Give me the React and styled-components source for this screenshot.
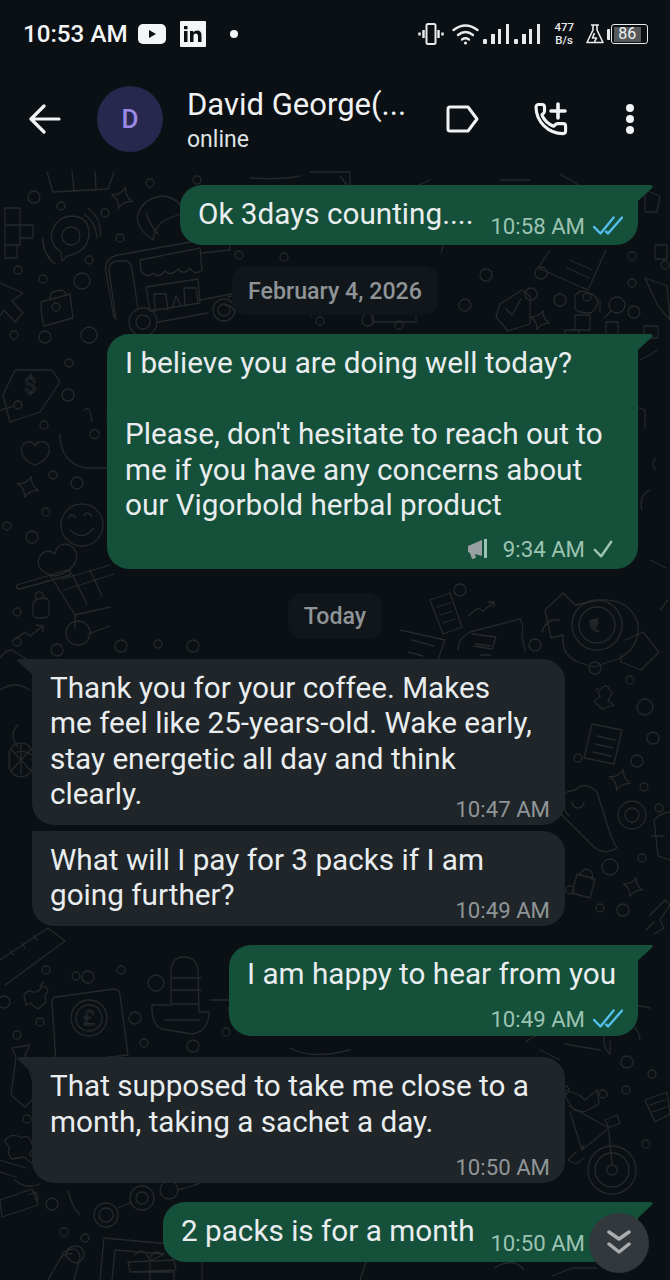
import React from "react";
import styled, { createGlobalStyle } from "styled-components";

const Global = createGlobalStyle`
  html, body { margin: 0; padding: 0; background: #0b1014; }
  * { box-sizing: border-box; }
`;

const Screen = styled.div`
  width: 670px;
  height: 1280px;
  overflow: hidden;
  background: #0b1014;
  font-family: Roboto, "Liberation Sans", sans-serif;
  color: #e9edef;
  display: flex;
  flex-direction: column;
`;

const Header = styled.header`
  height: 170px;
  flex: none;
  display: flex;
  flex-direction: column;
  background: #0b1014;
`;

const StatusBar = styled.div`
  height: 68px;
  padding: 0 22px 0 23px;
  display: flex;
  align-items: center;
  justify-content: space-between;
`;

const StatusGroup = styled.div`
  display: flex;
  align-items: center;
`;

const Clock = styled.span`
  font-size: 24.2px;
  font-weight: 500;
  color: #f4f5f6;
  margin-right: 10px;
`;

const NetSpeed = styled.span`
  display: flex;
  flex-direction: column;
  align-items: center;
  font-size: 11.5px;
  line-height: 13px;
  font-weight: 500;
  color: #e8eaeb;
  margin: 0 12px 0 13px;
`;

const BatteryWrap = styled.div`
  display: flex;
  align-items: center;
  margin-left: 3px;
`;

const BatteryNub = styled.span`
  width: 3px;
  height: 11px;
  background: #e8eaeb;
  border-radius: 1px 0 0 1px;
  margin-right: 1px;
`;

const Battery = styled.div`
  width: 37px;
  height: 20px;
  border: 1.5px solid #e8eaeb;
  border-radius: 3px;
  padding: 1.5px;
  display: flex;
`;

const BatteryFill = styled.span`
  flex: none;
  width: 86%;
  background: #55595b;
  color: #f0f1f2;
  font-size: 16px;
  line-height: 14px;
  text-align: center;
`;

const Toolbar = styled.div`
  flex: 1;
  display: flex;
  align-items: center;
  padding: 0 0 0 29px;
`;

const Avatar = styled.div`
  width: 66px;
  height: 66px;
  border-radius: 50%;
  background: #28284f;
  color: #9a8ae6;
  font-size: 26px;
  font-weight: 500;
  display: flex;
  align-items: center;
  justify-content: center;
  margin: 0 24px 0 36px;
`;

const Contact = styled.div`
  width: 258px;
  display: flex;
  flex-direction: column;
  margin-top: 4px;
`;

const ContactName = styled.div`
  font-size: 31px;
  line-height: 36px;
  color: #f0f2f3;
  white-space: nowrap;
`;

const ContactStatus = styled.div`
  font-size: 23px;
  line-height: 33px;
  color: #dfe2e4;
`;

const ToolIcon = styled.div`
  width: ${(p) => p.$w}px;
  margin-left: ${(p) => p.$left || 0}px;
  display: flex;
  justify-content: center;
  flex: none;
`;

const Chat = styled.main`
  position: relative;
  flex: 1;
  overflow: hidden;
`;

const Doodles = styled.svg`
  position: absolute;
  inset: 0;
  width: 670px;
  height: 1110px;
  fill: none;
  stroke: #25292c;
  stroke-width: 1.3;
  stroke-linejoin: round;
  stroke-linecap: round;
  text { font-family: Roboto, sans-serif; stroke-width: 1; }
`;

const Messages = styled.div`
  position: relative;
  display: flex;
  flex-direction: column;
  padding-top: 15px;
`;

const Bubble = styled.div`
  position: relative;
  flex: none;
  width: ${(p) => p.$w}px;
  margin-top: ${(p) => p.$top}px;
  align-self: ${(p) => (p.$out ? "flex-end" : "flex-start")};
  margin-left: ${(p) => (p.$out ? 0 : 32)}px;
  margin-right: ${(p) => (p.$out ? 32 : 0)}px;
  background: ${(p) => (p.$out ? "#14503a" : "#1f2528")};
  border-radius: ${(p) => (p.$out ? "22px 0 22px 22px" : "0 22px 22px 22px")};
  padding: 11px 15px ${(p) => p.$pb}px 18px;

  &::before {
    content: "";
    position: absolute;
    top: 0;
    width: ${(p) => (p.$tail ? 15 : 0)}px;
    height: 16px;
    background: inherit;
    ${(p) =>
      p.$out
        ? "left: 100%; clip-path: polygon(0 0, 88% 0, 100% 12%, 0 100%);"
        : "right: 100%; clip-path: polygon(100% 0, 12% 0, 0 12%, 100% 100%);"}
  }
`;

const InlineRow = styled.div`
  display: flex;
  justify-content: space-between;
  align-items: flex-end;
`;

const Text = styled.div`
  font-size: 29.7px;
  line-height: 35.5px;
  white-space: nowrap;
  color: #e9edef;
  margin-bottom: ${(p) => p.$below || 0}px;
`;

const Meta = styled.div`
  height: 28px;
  margin-top: ${(p) => p.$top || 0}px;
  display: flex;
  align-items: center;
  justify-content: flex-end;
  gap: 8px;
  font-size: 22.2px;
  color: ${(p) => (p.$out ? "#9cc3b2" : "#8f9598")};
  white-space: nowrap;
`;

const DatePill = styled.div`
  align-self: center;
  flex: none;
  height: ${(p) => p.$h}px;
  margin-top: ${(p) => p.$top}px;
  padding: 0 16px;
  border-radius: 14px;
  background: #11161a;
  color: #8e9497;
  font-size: 23.2px;
  font-weight: 500;
  display: flex;
  align-items: center;
`;

const ScrollButton = styled.div`
  position: absolute;
  left: 589px;
  top: 1043px;
  width: 60px;
  height: 60px;
  border-radius: 50%;
  background: #32383c;
  display: flex;
  align-items: center;
  justify-content: center;
`;

const TicksSvg = styled.svg`
  flex: none;
`;

const CheckSvg = styled.svg`
  flex: none;
  margin-right: 10px;
`;

const MegaphoneSvg = styled.svg`
  flex: none;
  margin-right: 6px;
`;

const LinkedinSvg = styled.svg`
  margin: 0 24px 0 14px;
`;

const WifiSvg = styled.svg`
  margin-left: 8px;
`;

const SignalSvg = styled.svg`
  margin-left: 4px;
`;

const Ticks = () => (
  <TicksSvg width="30" height="22" viewBox="0 0 32 22" fill="none" stroke="#53bdeb" strokeWidth="2.6" strokeLinecap="round" strokeLinejoin="round">
    <path d="M1 12l7 7L22 2" />
    <path d="M14 17l2 2L31 2" />
  </TicksSvg>
);

const Check = () => (
  <CheckSvg width="20" height="20" viewBox="0 0 22 20" fill="none" stroke="#9cc3b2" strokeWidth="2.7" strokeLinecap="round" strokeLinejoin="round">
    <path d="M2 11l7 7L20 2" />
  </CheckSvg>
);

const Megaphone = () => (
  <MegaphoneSvg width="22" height="22" viewBox="0 0 22 22">
    <path d="M1 8l14-6v16L8 16l1 4-4 1-2-6-2-1z" fill="#9aa0a2" />
    <path d="M18.5 1v19" stroke="#9cc3b2" strokeWidth="3" />
  </MegaphoneSvg>
);

const Star = ({ x, y, r }) => (
  <path d={`M${x} ${y - r}Q${x + r * 0.2} ${y - r * 0.2} ${x + r} ${y}Q${x + r * 0.2} ${y + r * 0.2} ${x} ${y + r}Q${x - r * 0.2} ${y + r * 0.2} ${x - r} ${y}Q${x - r * 0.2} ${y - r * 0.2} ${x} ${y - r}z`} transform={`rotate(18 ${x} ${y})`} />
);

const dots = [
  [34, 197, 6], [61, 206, 4], [105, 213, 4], [150, 183, 4], [120, 238, 4], [89, 260, 4], [18, 270, 4], [43, 279, 4], [82, 281, 8], [14, 335, 4],
  [45, 337, 6], [89, 335, 8], [69, 363, 4], [197, 180, 4], [68, 395, 6], [44, 425, 4], [53, 475, 4], [77, 483, 6], [46, 512, 4], [7, 526, 4],
  [32, 537, 6], [17, 612, 4], [57, 650, 6], [17, 642, 4], [121, 646, 6], [158, 644, 4], [193, 646, 6], [460, 590, 6], [535, 645, 6],
  [595, 668, 6], [630, 680, 4], [645, 707, 8], [653, 738, 6], [578, 758, 4], [637, 761, 6], [644, 787, 4], [610, 867, 8], [642, 858, 4],
  [570, 890, 4], [600, 908, 4], [623, 910, 6], [659, 808, 4], [76, 976, 4], [88, 977, 6], [46, 970, 4], [121, 970, 4], [156, 983, 8],
  [4, 1002, 6], [40, 1022, 4], [135, 1018, 6], [144, 1043, 4], [193, 1046, 6], [226, 1032, 4], [17, 1035, 4], [27, 1119, 4], [52, 1204, 6],
  [64, 1232, 4], [85, 1238, 4], [627, 1062, 6], [652, 1074, 4], [603, 1094, 4], [626, 1090, 4], [646, 1144, 4], [239, 255, 4], [284, 257, 4],
  [486, 275, 6], [541, 273, 6], [531, 294, 6], [465, 305, 6], [368, 320, 6], [320, 321, 4], [399, 325, 4], [632, 256, 4], [665, 265, 4],
  [632, 283, 4], [587, 297, 4], [634, 312, 6], [560, 300, 6], [565, 1090, 4],
];

const lines = [
  "M47 172l6 20 55-3 6-17M72 172l2 18M95 172l1 16",
  "M5 208h15v17H5zM20 225h13v13H20zM5 225h15v20H5zM5 245h12v13H5z",
  "M52 232q4-14 18-16 18 0 19 16 0 20-22 24l-5 5-1-9q-12-8-9-20zM62 236a9 9 0 1 1 18 0 9 9 0 1 1-18 0zM43 240q1 16 12 24M50 258q-8-8-7-20M84 214q12 8 13 24M88 208q14 10 12 28",
  "M114 318l-8-46q-2-14 12-17l84-15 28-3v13l-28 3M116 320l-7-50q0-8 8-9h8q6 0 7 8l6 40M140 260l60-12 2 22q-8 6-12-2-6 8-12 1-7 8-13 2-6 8-12 2-6 6-12-2zM146 287l52-8 2 24-50 8zM155 312l-1-18h12l2 16M172 308l4-12 5 10M185 306l-1-18h12l2 15M158 322l50-9M232 296l-4 1",
  "M129 322a14 14 0 1 0 28 0 14 14 0 1 0-28 0zM136 322a7 7 0 1 0 14 0 7 7 0 1 0-14 0zM213 310a11 11 0 1 0 22 0 11 11 0 1 0-22 0zM218 310a6 6 0 1 0 12 0 6 6 0 1 0-12 0z",
  "M41 302l29-8 3 24-29 8q-3-10-3-24zM50 298q0-6 6-7l6-1q4 2 4 6M52 307a4 4 0 1 0 8 0 4 4 0 1 0-8 0z",
  "M0 283l23 10-11 8 11 12-8 9-11-12-4 6",
  "M137 218q3-18 24-22 16 0 24 16l-20 8q-10 6-12 20-14-8-16-22zM146 212q4 14 12 22",
  "M3 395l12-25h37l8 12-20 30-30 10zM14 405a4 4 0 1 0 8 0 4 4 0 1 0-8 0zM0 410l14-4",
  "M35 465c-12-4-16-14-12-20 4-5 10-4 12 1 2-5 9-6 13-1 4 6-1 16-13 20z",
  "M107 420q0-24 30-34M60 434q0 28 25 34l25 0M90 434a4 4 0 1 0 9 0 4 4 0 1 0-9 0zM84 410q6-6 8 12",
  "M61 525a21 21 0 1 1 42 0 21 21 0 1 1-42 0zM68 518q4-6 8 0M84 516q3-6 8 0M70 530q12 12 24-2",
  "M55 576c-14-3-20-10-15-20 4-6 10-6 15-2 2-10 10-12 16-8 6 4 8 14 2 20-4 5-10 8-18 10z",
  "M17 585l50-15q5 0 3 5l-50 14q-5 0-3-4zM50 575l25 40 35-8M64 590l50-16M72 574l15 30M90 570l12 26M110 565l-47 14M75 615v14M88 634l22-8",
  "M66 633a12 12 0 1 0 24 0 12 12 0 1 0-24 0z",
  "M33 605q0-5 5-6l7-1q4 1 4 6v9q0 5-6 5h-6q-5-1-4-6zM36 598a4 4 0 1 1 7-1",
  "M12 641l13-9 5 4 13-10M36 625l7 1 0 6",
  "M0 658q5-8 12-8l16 10M0 690q15-10 30 0",
  "M18 725q-10 10 0 22M17 752q8-2 15 3",
  "M10 760a12 12 0 1 0 22 0 12 12 0 1 0-22 0zM21 745v30M12 750l18 20M30 750l-18 20",
  "M430 600l20-7 12 34-19 7zM437 607l13-4M440 615l13-4M443 623l12-4",
  "M468 616l10-8 5 3 11-9M488 602l6 0 0 5",
  "M458 650q0-12 12-18l50-13q4 6 2 16l3 16M472 634l24 3-4 12-18-3M476 644l14 2M480 655l10 0",
  "M400 630l45 10-8 22M412 640l22 6M408 652l15 4",
  "M545 610l18-17 12 12 25-5q30-2 38 24 2 24-20 35l-25 8-12-4q-20-6-18-28l-12 3z",
  "M572 625a25 25 0 1 0 50 0 25 25 0 1 0-50 0zM579 625a18 18 0 1 0 36 0 18 18 0 1 0-36 0z",
  "M625 640l18-8 16 20-18 18-20-8 0-8",
  "M600 690q4-6 8-3l4 6-4 8 6 4-12 4-8-8 6-4-2-5zM598 688l-2 2",
  "M592 724l30 6-8 34-30-6zM597 736l18 4M595 744l18 4M593 752l18 4",
  "M575 790q10-10 22 2l12 38q4 12 8 18-14 8-24-2l-32-32q-8-12 6-22z",
  "M565 800q-2 12 4 16M572 802a6 6 0 1 0 12 0",
  "M618 815a14 14 0 1 0 28 0 14 14 0 1 0-28 0zM625 815a7 7 0 1 0 14 0 7 7 0 1 0-14 0z",
  "M577 874l18 5-5 19-18-5zM580 876q2-9 9-6 5 2 3 10",
  "M654 820q8-8 16-8M654 820l4 36 12 4M652 836h12",
  "M650 915l15-15 5 5-10 15 4 8-10 6M646 930l8-8",
  "M0 960l48-32 17 13-60 44M10 950l3 5M22 943l3 5M34 935l3 5",
  "M24 995q4-6 9-3 6 1 8-5 6-2 7 4l-3 5 1 6-8 7-8-6-4 2zM44 982l-4 4",
  "M56 997l58-8q5 0 6 6l8 60-72 8-4-60q0-6 4-6z",
  "M71 1018a18 18 0 1 0 36 0 18 18 0 1 0-36 0zM76 1018a13 13 0 1 0 26 0 13 13 0 1 0-26 0z",
  "M152 1005q-1 20 10 24l30 5q17-3 17-22h-10l-1-42q-2-13-14-13-13 0-13 15v33zM173 978h28M172 990h29M172 1004h27M165 1020h35",
  "M12 1048l18-3-5 10 12 40-12 12-14-12 5-38z",
  "M5 1140q8-8 16-2 8-4 10 4 5 6-2 12l10 8-4 4-11-9-12 2q-6-6-2-12-5-4-5-7z",
  "M0 1160l26 8M0 1172l16 5M15 1180q10 10 25 4",
  "M0 1200l32-11 6 16-36 12zM28 1195l8-3 2 8",
  "M48 1280l16-28q15-8 16 6l-6 22M58 1262q6-10 14-8M66 1256q0-10 10-10 8 0 8 10-6 14-18 0z",
  "M130 1272h44v8M128 1262l46-2 2 10-46 2zM150 1260v20M135 1255q8-10 14 4 6-12 14-4l-14 6",
  "M100 1280l4-42 66 6M112 1280l3-30 50 4M202 1250v30",
  "M94 1215a12 12 0 1 0 24 0 12 12 0 1 0-24 0zM99 1215a7 7 0 1 0 14 0 7 7 0 1 0-14 0zM130 1198a12 12 0 1 0 24 0 12 12 0 1 0-24 0zM136 1198a6 6 0 1 0 12 0 6 6 0 1 0-12 0zM118 1208l12-5M80 1215q-8-8-12-24M160 1190a9 9 0 1 0 18 0 9 9 0 1 0-18 0zM178 1190q25-6 50-20",
  "M588 1170a24 24 0 1 0 48 0 24 24 0 1 0-48 0zM595 1170a17 17 0 1 0 34 0 17 17 0 1 0-34 0zM607 1170a5 5 0 1 0 10 0 5 5 0 1 0-10 0z",
  "M612 1165l-3-34M570 1112l12 38 27-22-40-22M582 1150l2-5M609 1128l-4-8 12-5 3 8-12 5",
  "M566 1090l13 5 6 5 12-10 2 14-15 8-10-2-8-12zM576 1152l-8 8 8 4 8-6",
  "M645 1100l22-8 3 22-15 8z M650 1105l15-5M652 1112l15-5",
  "M520 1060q-18 22-4 20M545 1032l-14 6-5 4M560 1060l-20-10M600 1050l-35-6",
  "M480 960l-10 14 32 6-5-18zM610 1040v12M640 1040a18 18 0 1 0-30 14",
  "M210 1000h32M240 980l-12 30M360 1280l14-40q8-8 13 0",
  "M468 1220l12-17q10 2 12 12l-4 13M494 1268q20-12 30 2M552 1276l20-8h25",
  "M230 1220l-25 35",
  "M430 1010l-25 20M350 1050q-40 10-60-2",
  "M500 304l22-14 8 6 0 28-22 7-12-14zM506 309l6 6 9-16",
  "M575 296q4-8 14-3 8 2 9 10-4 9-8 10-12 0-15-4zM609 305a8 8 0 1 0 16 0 8 8 0 1 0-16 0zM611 311l-7 7",
  "M645 278l22 8 3 34-12-14z",
  "M565 330h14v14h-14zM575 315h15v15h-15zM606 322h12v14h-12zM644 326h14v12h-14z",
  "M550 250l-12 18 50 22 18-40M570 260l22 10M567 268l22 10",
  "M412 312h-40v10h44v-10M400 300q2-12 10-8M420 280q10 6 10 20-1 10-8 14M441 252l5-12",
  "M260 312q20-8 44-10l7 14M200 300q22-4 40-8M225 305q8 0 10 8",
  "M600 300v12M655 245h12v14h-12zM645 190l15 6-3 16-12 0z",
  "M480 200l-30 14M430 180l-40 18M340 176l14 18M370 200l14-12M500 180h30M560 174l24 14",
  "M250 178q30 2 50-2M310 172h40v16",
  "M650 490q-12 6-8 20M656 470q-6-6 0-12",
  "M615 400l30 10v18M640 360l18-10M600 400l22-8M650 560l16 8",
  "M560 620q-14-2-18 12M660 610l8-10",
  "M610 1000l40 8M600 985l14 0",
];

const DoodleBackground = () => (
  <Doodles viewBox="0 170 670 1110" aria-hidden="true">
    {lines.map((d, i) => (
      <path key={i} d={d} />
    ))}
    {dots.map(([x, y, r], i) => (
      <circle key={i} cx={x} cy={y} r={r} />
    ))}
    <Star x={122} y={198} r={11} />
    <Star x={28} y={487} r={11} />
    <Star x={620} y={780} r={11} />
    <Star x={633} y={887} r={10} />
    <Star x={540} y={320} r={10} />
    <text x="24" y="393" fontSize="22">$</text>
    <text x="590" y="632" fontSize="18" transform="rotate(-15 597 625)">₹</text>
    <text x="83" y="1025" fontSize="20">£</text>
  </Doodles>
);

const BackArrow = () => (
  <svg width="32" height="30" viewBox="0 0 32 30" fill="none" stroke="#f2f3f4" strokeWidth="3.2" strokeLinecap="round" strokeLinejoin="round">
    <path d="M30 15H3M15 2L2 15l13 13" />
  </svg>
);

const TagIcon = () => (
  <svg width="34" height="28" viewBox="0 0 34 28" fill="none" stroke="#f2f3f4" strokeWidth="3" strokeLinejoin="round">
    <path d="M3 4q0-2 2-2h18l9 12-9 12H5q-2 0-2-2z" />
  </svg>
);

const CallAdd = () => (
  <svg width="36" height="36" viewBox="0 0 36 36" fill="none" stroke="#f2f3f4" strokeWidth="3.1" strokeLinejoin="round" strokeLinecap="round">
    <path d="M20 25c.5.2 1.2 0 1.6-.5l.6-.7a3 3 0 0 1 2.4-1.2h5.5a2.5 2.5 0 0 1 2.5 2.5v5a2.500 2.500 0 0 1-2.500 2.500A27 27 0 0 1 3 6a2.500 2.500 0 0 1 2.500-2.500H9a2.500 2.500 0 0 1 2.500 2.500v4a3 3 0 0 1-1.200 2.400l-.7.5a1.500 1.500 0 0 0-.4 1.900 21 21 0 0 0 10.800 10.200" />
    <path d="M25 3v14M18 10h14" strokeWidth="3.600" />
  </svg>
);

const Dots = () => (
  <svg width="12" height="32" viewBox="0 0 12 32" fill="#f2f3f4">
    <circle cx="6" cy="5" r="4" />
    <circle cx="6" cy="16" r="4" />
    <circle cx="6" cy="27" r="4" />
  </svg>
);

const Youtube = () => (
  <svg width="28" height="20" viewBox="0 0 28 20">
    <rect width="28" height="20" rx="5" fill="#f4f5f6" />
    <path d="M11 6l7 4-7 4z" fill="#0b1014" />
  </svg>
);

const Linkedin = () => (
  <LinkedinSvg width="26" height="26" viewBox="0 0 26 26">
    <rect width="26" height="26" rx="1" fill="#f4f5f6" />
    <path d="M4 10h3.500v11H4zM4 5h3.500v3.300H4zM10 10h3.300v1.500q1.300-2 3.800-2 4.400 0 4.400 5V21H18v-6q0-2.600-2.200-2.600-2.300 0-2.300 2.800V21H10z" fill="#0b1014" />
  </LinkedinSvg>
);

const Vibrate = () => (
  <svg width="26" height="24" viewBox="0 0 26 24" fill="none" stroke="#e8eaeb" strokeWidth="2">
    <rect x="8.500" y="2" width="9" height="20" rx="1.500" />
    <path d="M5.500 8v8M1.500 10.500v3M20.500 8v8M24.500 10.500v3" strokeWidth="2.500" />
  </svg>
);

const Wifi = () => (
  <WifiSvg width="27" height="22" viewBox="0 0 27 22" fill="none" stroke="#e8eaeb" strokeWidth="2.300" strokeLinecap="round">
    <path d="M1.500 7q12-9 24 0M6 12q7.500-6 15 0M10 16.500q3.500-2.500 7 0" />
    <circle cx="13.500" cy="20" r="1.600" fill="#e8eaeb" stroke="none" />
  </WifiSvg>
);

const Signal = () => (
  <SignalSvg width="27" height="20" viewBox="0 0 27 20" fill="#e8eaeb">
    <rect x="0" y="15" width="4" height="5" rx="1" />
    <rect x="8" y="10" width="4" height="10" />
    <rect x="15" y="5" width="3" height="15" />
    <rect x="23" y="0" width="3" height="20" />
  </SignalSvg>
);

const Flask = () => (
  <svg width="18" height="20" viewBox="0 0 18 20" fill="none" stroke="#e8eaeb" strokeWidth="1.600" strokeLinejoin="round">
    <path d="M5 1h8M7 1v5L1 18.500h16L11 6V1M8.500 9l-2 5h4l-2 4" />
  </svg>
);

const Chevrons = () => (
  <svg width="24" height="28" viewBox="0 0 24 28" fill="none" stroke="#a9adb0" strokeWidth="3.500" strokeLinecap="round" strokeLinejoin="round">
    <path d="M2 3l10 7 10-7M2 15l10 8 10-8" />
  </svg>
);

export default function App() {
  return (
    <Screen>
      <Global />
      <Header>
        <StatusBar>
          <StatusGroup>
            <Clock>10:53 AM</Clock>
            <Youtube />
            <Linkedin />
            <svg width="8" height="8" viewBox="0 0 8 8"><circle cx="4" cy="4" r="4" fill="#f4f5f6" /></svg>
          </StatusGroup>
          <StatusGroup>
            <Vibrate />
            <Wifi />
            <Signal />
            <Signal />
            <NetSpeed><span>477</span><span>B/s</span></NetSpeed>
            <Flask />
            <BatteryWrap>
              <BatteryNub />
              <Battery><BatteryFill>86</BatteryFill></Battery>
            </BatteryWrap>
          </StatusGroup>
        </StatusBar>
        <Toolbar>
          <BackArrow />
          <Avatar>D</Avatar>
          <Contact>
            <ContactName>David George(...</ContactName>
            <ContactStatus>online</ContactStatus>
          </Contact>
          <ToolIcon $w={34}><TagIcon /></ToolIcon>
          <ToolIcon $w={36} $left={54}><CallAdd /></ToolIcon>
          <ToolIcon $w={12} $left={55}><Dots /></ToolIcon>
        </Toolbar>
      </Header>
      <Chat>
        <DoodleBackground />
        <Messages>
          <Bubble $out $tail $w={458} $top={0} $pb={5}>
            <InlineRow>
              <Text $below={8.5}>Ok 3days counting....</Text>
              <Meta $out>10:58 AM <Ticks /></Meta>
            </InlineRow>
          </Bubble>
          <DatePill $top={21} $h={49}>February 4, 2026</DatePill>
          <Bubble $out $tail $w={531} $top={19} $pb={6}>
            <Text>
              I believe you are doing well today?<br /><br />
              Please, don't hesitate to reach out to<br />
              me if you have any concerns about<br />
              our Vigorbold herbal product
            </Text>
            <Meta $out $top={12}><Megaphone /> 9:34 AM <Check /></Meta>
          </Bubble>
          <DatePill $top={24} $h={46}>Today</DatePill>
          <Bubble $tail $w={533} $top={20} $pb={2}>
            <Text>
              Thank you for your coffee. Makes<br />
              me feel like 25-years-old. Wake early,<br />
              stay energetic all day and think<br />
              clearly.
            </Text>
            <Meta $top={-17}>10:47 AM</Meta>
          </Bubble>
          <Bubble $w={533} $top={6} $pb={2}>
            <Text>
              What will I pay for 3 packs if I am<br />
              going further?
            </Text>
            <Meta $top={-17}>10:49 AM</Meta>
          </Bubble>
          <Bubble $out $tail $w={409} $top={19} $pb={3}>
            <Text>I am happy to hear from you</Text>
            <Meta $out $top={14}>10:49 AM <Ticks /></Meta>
          </Bubble>
          <Bubble $tail $w={533} $top={21} $pb={2}>
            <Text>
              That supposed to take me close to a<br />
              month, taking a sachet a day.
            </Text>
            <Meta $top={14}>10:50 AM</Meta>
          </Bubble>
          <Bubble $out $tail $w={475} $top={19} $pb={5}>
            <InlineRow>
              <Text $below={8.5}>2 packs is for a month</Text>
              <Meta $out>10:50 AM <Ticks /></Meta>
            </InlineRow>
          </Bubble>
        </Messages>
        <ScrollButton><Chevrons /></ScrollButton>
      </Chat>
    </Screen>
  );
}
